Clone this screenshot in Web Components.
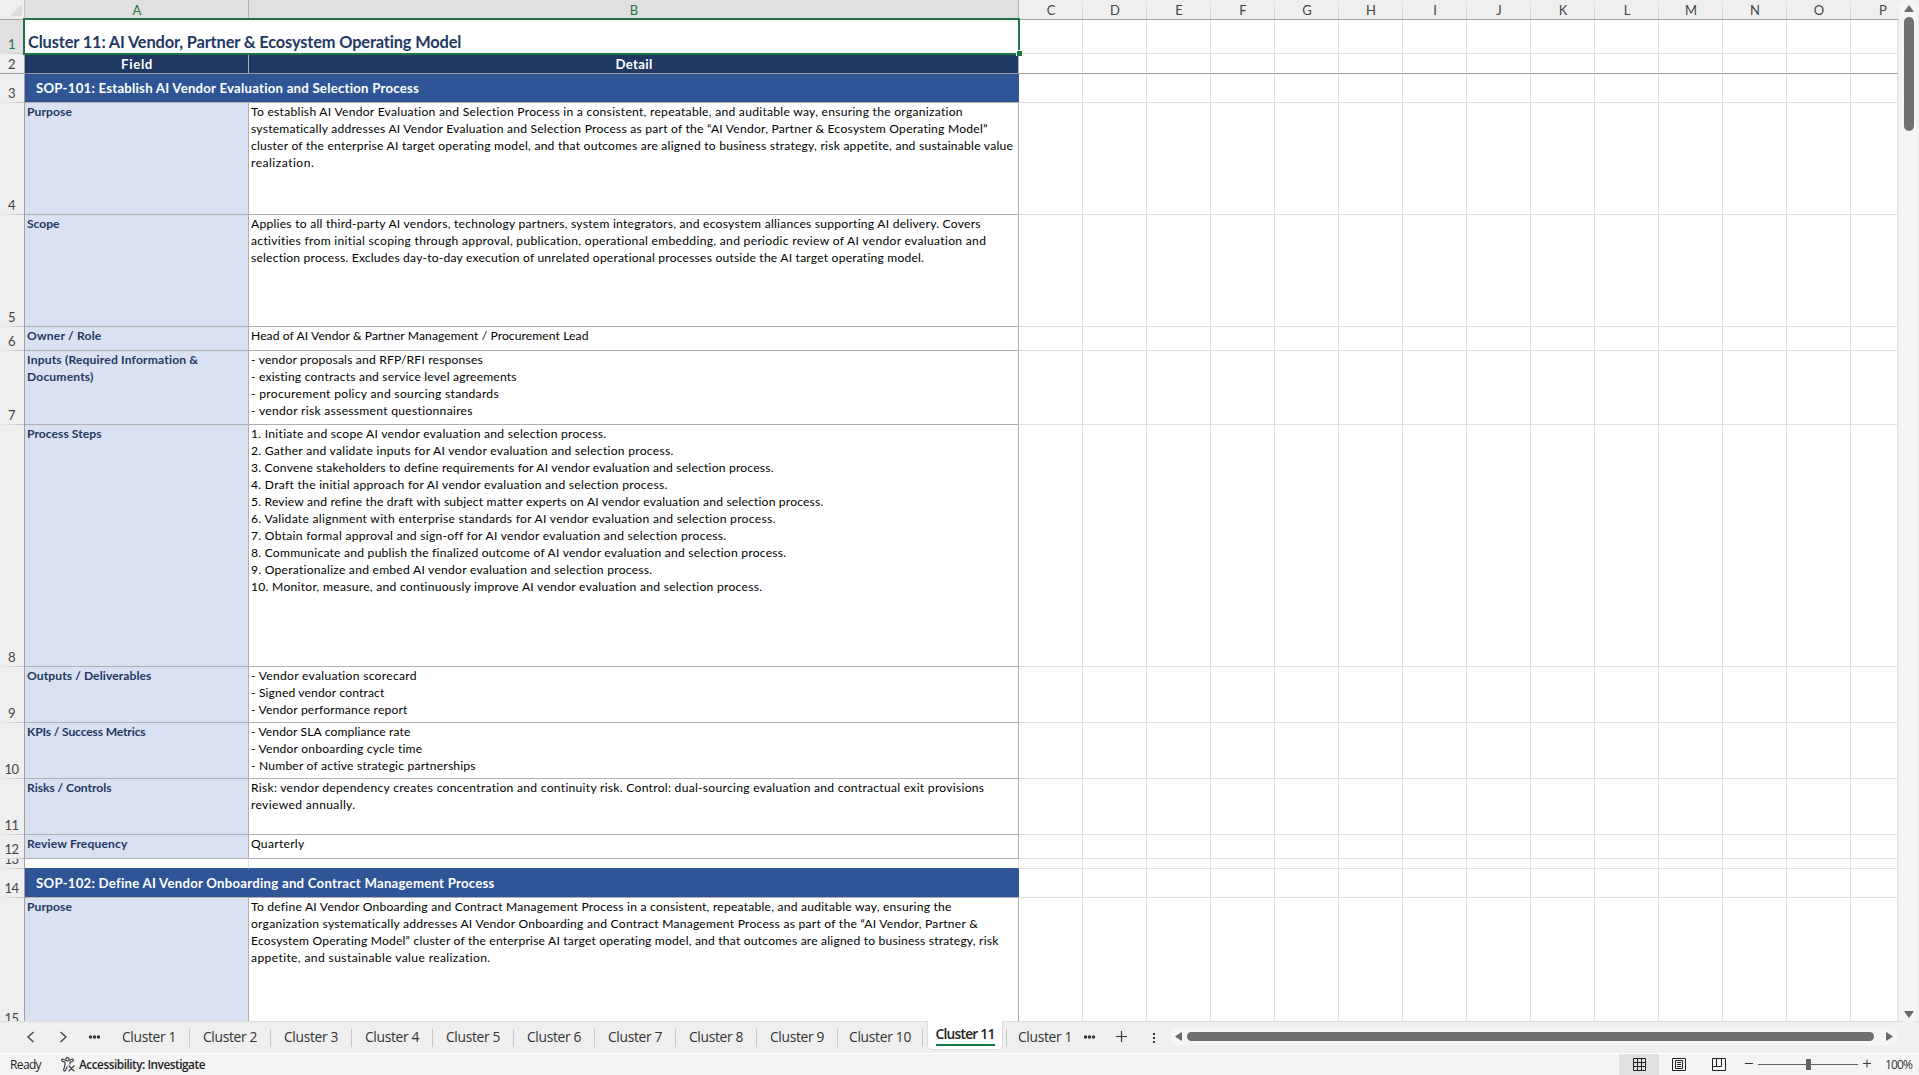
<!DOCTYPE html>
<html lang="en">
<head>
<meta charset="utf-8">
<title>Workbook</title>
<style>
  html, body { margin: 0; height: 100%; overflow: hidden; }
  body { font-family: Lato, "Liberation Sans", sans-serif; background: #f4f4f4; }
</style>
</head>
<body>
<work-book></work-book>

<script>
// small helper: attach an open shadow root and fill it
function shadow(el, html) {
  el.attachShadow({ mode: "open" });
  el.shadowRoot.innerHTML = html;
}

// one line of text, spaced so that it takes exactly `w` pixels
class FitText extends HTMLElement {
  constructor() {
    super();
    shadow(this, `<style>:host { display: flex; } span { flex: none; white-space: pre; }</style><span></span>`);
  }
  connectedCallback() {
    const span = this.shadowRoot.querySelector("span");
    span.textContent = this.getAttribute("text");
    const w = parseFloat(this.getAttribute("w"));
    if (w) {
      const natural = span.getBoundingClientRect().width;
      const gap = (w - natural) / span.textContent.length;
      span.style.letterSpacing = gap.toFixed(4) + "px";
    }
  }
}
customElements.define("fit-text", FitText);

const fit = ([text, w]) => `<fit-text text="${text.replace(/&/g, "&amp;")}" w="${w}"></fit-text>`;

// column letters along the top
class ColumnHeads extends HTMLElement {
  connectedCallback() {
    const rest = "CDEFGHIJKLMNOP".split("").map(c => `<div class="c">${c}</div>`).join("");
    shadow(this, `
      <style>
        :host { display: flex; flex: none; height: 19px; border-bottom: 1px solid #a0a0a0; background: #efefef; overflow: hidden;
                font-size: 13px; line-height: 18px; color: #444; }
        div { box-sizing: border-box; flex: none; text-align: center; height: 19px; padding: 1px 0 0 1px; }
        .corner { width: 25px; border-right: 1px solid #c4c4c4; padding: 4px 0 0 9px; line-height: 0; }
        .on { background: #e0e0e0; color: #217346; border-right: 1px solid #b4b4b4; }
        .a { width: 224px; }
        .b { width: 770px; }
        .c { width: 64px; border-right: 1px solid; border-image: linear-gradient(#efefef, #c8c8c8) 1; }
      </style>
      <div class="corner"><svg width="13" height="12"><path d="M12 0V12H0Z" fill="#dcdcdc"/></svg></div>
      <div class="on a">A</div><div class="on b">B</div>${rest}`);
  }
}
customElements.define("column-heads", ColumnHeads);

// one row of the sheet; kind is title, head, sop, field or blank
class SheetRow extends HTMLElement {
  set row(r) {
    const kind = r.kind;
    this.setAttribute("kind", kind);
    let cells;
    if (kind == "title" || kind == "sop") {
      cells = `<div class="wide">${fit(r.a)}</div>`;
    } else if (kind == "head") {
      cells = `<div class="a">${fit(r.a)}</div><div class="b">${fit(r.b)}</div>`;
    } else {
      cells = `<div class="a">${(r.a || []).map(fit).join("")}</div><div class="b">${(r.b || []).map(fit).join("")}</div>`;
    }
    shadow(this, `
      <style>
        :host { display: flex; flex: none; height: ${r.h}px; font-size: 12.1px; line-height: 17px; color: #000; }
        div { box-sizing: border-box; flex: none; }
        .n { width: 24px; display: flex; align-items: flex-end; justify-content: center; overflow: hidden;
             font-size: 13px; line-height: 16px; letter-spacing: -.6px; color: #444; background: #efefef;
             padding: 0 1px 1px 0;
             border-bottom: 1px solid; border-image: linear-gradient(90deg, #efefef, #c0c0c0) 1; }
        .bar { width: 1px; background: #a0a0a0; }
        .a { width: 224px; padding: 0 0 0 2px; border: solid #b0b0b0; border-width: 0 1px 1px 0; background: #d9e1f2;
             color: #1f3864; font-weight: bold; }
        .b { width: 770px; padding: 0 0 0 2px; border: solid #b0b0b0; border-width: 0 1px 1px 0; background: #fff; }
        .c { width: 64px; border: solid #e0e0e0; border-width: 0 1px 1px 0; background: #fff; }
        .c:last-child { width: 47px; }
        .wide { width: 994px; font-weight: bold; }
        :host([kind=title]) .n { background: #e0e0e0; color: #217346; }
        :host([kind=title]) .wide { font-size: 16.4px; line-height: 22px; padding: 11px 0 0 3px; color: #1f3864; background: #fff; }
        :host([kind=head]) .n, :host([kind=head]) .c { border-bottom: 1px solid #9a9a9a; border-image: none; }
        :host([kind=head]) .a, :host([kind=head]) .b { background: #203864; color: #fff; font-weight: bold; font-size: 13.2px;
             line-height: 18px; padding: 1px 0 0 1px; display: flex; justify-content: center; border-bottom-color: #9a9a9a; }
        :host([kind=sop]) .wide { font-size: 13.2px; line-height: 18px; padding: 5px 0 0 11px; color: #fff; background: #2f5597;
             border-bottom: 1px solid #b0b0b0; }
        :host([kind=blank]) .a, :host([kind=blank]) .b { background: #fff; border-color: #e0e0e0; border-bottom-color: #2f5597; }
      </style>
      <div class="n">${r.n}</div><div class="bar"></div>${cells}${'<div class="c"></div>'.repeat(14)}`);
  }
}
customElements.define("sheet-row", SheetRow);

const ROWS = [
  { n: 1, h: 34, kind: "title", a: ["Cluster 11: AI Vendor, Partner & Ecosystem Operating Model", 433.5] },
  { n: 2, h: 20, kind: "head", a: ["Field", 32], b: ["Detail", 37] },
  { n: 3, h: 29, kind: "sop", a: ["SOP-101: Establish AI Vendor Evaluation and Selection Process", 383.5] },
  { n: 4, h: 112, kind: "field", a: [["Purpose", 45]], b: [
    ["To establish AI Vendor Evaluation and Selection Process in a consistent, repeatable, and auditable way, ensuring the organization", 712.5],
    ["systematically addresses AI Vendor Evaluation and Selection Process as part of the “AI Vendor, Partner & Ecosystem Operating Model”", 737.5],
    ["cluster of the enterprise AI target operating model, and that outcomes are aligned to business strategy, risk appetite, and sustainable value", 762.5],
    ["realization.", 63.5]] },
  { n: 5, h: 112, kind: "field", a: [["Scope", 32.5]], b: [
    ["Applies to all third-party AI vendors, technology partners, system integrators, and ecosystem alliances supporting AI delivery. Covers", 730],
    ["activities from initial scoping through approval, publication, operational embedding, and periodic review of AI vendor evaluation and", 736.5],
    ["selection process. Excludes day-to-day execution of unrelated operational processes outside the AI target operating model.", 674]] },
  { n: 6, h: 24, kind: "field", a: [["Owner / Role", 74.5]], b: [["Head of AI Vendor & Partner Management / Procurement Lead", 337.5]] },
  { n: 7, h: 74, kind: "field", a: [["Inputs (Required Information &", 171.5], ["Documents)", 66.5]], b: [
    ["- vendor proposals and RFP/RFI responses", 232],
    ["- existing contracts and service level agreements", 266],
    ["- procurement policy and sourcing standards", 248],
    ["- vendor risk assessment questionnaires", 222]] },
  { n: 8, h: 242, kind: "field", a: [["Process Steps", 74.5]], b: [
    ["1. Initiate and scope AI vendor evaluation and selection process.", 356],
    ["2. Gather and validate inputs for AI vendor evaluation and selection process.", 423],
    ["3. Convene stakeholders to define requirements for AI vendor evaluation and selection process.", 523],
    ["4. Draft the initial approach for AI vendor evaluation and selection process.", 417],
    ["5. Review and refine the draft with subject matter experts on AI vendor evaluation and selection process.", 572],
    ["6. Validate alignment with enterprise standards for AI vendor evaluation and selection process.", 525],
    ["7. Obtain formal approval and sign-off for AI vendor evaluation and selection process.", 475.5],
    ["8. Communicate and publish the finalized outcome of AI vendor evaluation and selection process.", 535.5],
    ["9. Operationalize and embed AI vendor evaluation and selection process.", 402],
    ["10. Monitor, measure, and continuously improve AI vendor evaluation and selection process.", 512]] },
  { n: 9, h: 56, kind: "field", a: [["Outputs / Deliverables", 124.5]], b: [
    ["- Vendor evaluation scorecard", 166],
    ["- Signed vendor contract", 133.5],
    ["- Vendor performance report", 156.5]] },
  { n: 10, h: 56, kind: "field", a: [["KPIs / Success Metrics", 118.5]], b: [
    ["- Vendor SLA compliance rate", 159.5],
    ["- Vendor onboarding cycle time", 171.5],
    ["- Number of active strategic partnerships", 225]] },
  { n: 11, h: 56, kind: "field", a: [["Risks / Controls", 84.5]], b: [
    ["Risk: vendor dependency creates concentration and continuity risk. Control: dual-sourcing evaluation and contractual exit provisions", 734],
    ["reviewed annually.", 104.5]] },
  { n: 12, h: 24, kind: "field", a: [["Review Frequency", 100.5]], b: [["Quarterly", 53.5]] },
  { n: 13, h: 10, kind: "blank" },
  { n: 14, h: 29, kind: "sop", a: ["SOP-102: Define AI Vendor Onboarding and Contract Management Process", 458.5] },
  { n: 15, h: 130, kind: "field", a: [["Purpose", 45]], b: [
    ["To define AI Vendor Onboarding and Contract Management Process in a consistent, repeatable, and auditable way, ensuring the", 700.5],
    ["organization systematically addresses AI Vendor Onboarding and Contract Management Process as part of the “AI Vendor, Partner &", 727.5],
    ["Ecosystem Operating Model” cluster of the enterprise AI target operating model, and that outcomes are aligned to business strategy, risk", 748],
    ["appetite, and sustainable value realization.", 240]] }
];

class SheetGrid extends HTMLElement {
  connectedCallback() {
    shadow(this, `
      <style>
        :host { display: flex; flex-direction: column; position: relative; width: 1898px; height: 1021px; overflow: hidden; background: #fff; }
        .sel { position: absolute; left: 23px; top: 18px; width: 993px; height: 33px; border: 2px solid #217346; }
        .sel i { position: absolute; right: -4px; bottom: -3px; width: 5px; height: 5px; background: #217346;
                 border: solid #fff; border-width: 1px 0 0 1px; }
      </style>
      <column-heads></column-heads>
      <div class="sel"><i></i></div>`);
    const sel = this.shadowRoot.querySelector(".sel");
    ROWS.forEach(r => {
      const el = document.createElement("sheet-row");
      this.shadowRoot.insertBefore(el, sel);
      el.row = r;
    });
  }
}
customElements.define("sheet-grid", SheetGrid);

// vertical scroll bar
class ScrollColumn extends HTMLElement {
  connectedCallback() {
    shadow(this, `
      <style>
        :host { display: flex; flex-direction: column; align-items: center; box-sizing: border-box; width: 17px; height: 1023px;
                margin-left: 2px; padding: 5px 0 5px; background: #f5f5f5; border-radius: 8px; }
        .thumb { width: 10px; height: 114px; margin-top: 5px; border-radius: 5px; background: #707070; }
        svg { display: block; flex: none; }
        .down { margin-top: auto; }
      </style>
      <svg width="10" height="7"><path d="M5 0L9.6 6.2Q9.7 7 9 7H1Q.3 7 .4 6.2Z" fill="#6b6b6b"/></svg>
      <div class="thumb"></div>
      <svg class="down" width="10" height="7"><path d="M5 7L9.6 .8Q9.7 0 9 0H1Q.3 0 .4 .8Z" fill="#6b6b6b"/></svg>`);
  }
}
customElements.define("scroll-column", ScrollColumn);

class SheetTab extends HTMLElement {
  connectedCallback() {
    shadow(this, `
      <style>
        :host { display: flex; flex: none; box-sizing: border-box; justify-content: center; width: var(--w, 81px); height: 18px;
                margin-top: 7px; border-right: 1px solid #c8c8c8; line-height: 16px; color: #333; }
        :host([active]) { height: 29px; margin: -1px 3px 0 4px; border: 1px solid #dcdcdc; border-top: 0; border-radius: 0 0 5px 5px;
                background: #fff; font-weight: 600; line-height: 18px; color: #222; }
        :host([active]) div { height: 19px; padding-top: 4px; border-bottom: 2px solid #107c41; }
        :host([last]) { border: 0; justify-content: flex-start; padding-left: 11px; }
      </style>
      <div>${fit([this.getAttribute("text"), this.getAttribute("tw")])}</div>`);
  }
}
customElements.define("sheet-tab", SheetTab);

class TabBar extends HTMLElement {
  connectedCallback() {
    let tabs = "";
    for (let i = 1; i < 10; i++) tabs += `<sheet-tab text="Cluster ${i}" tw="54"></sheet-tab>`;
    shadow(this, `
      <style>
        :host { display: flex; box-sizing: border-box; height: 32px; border-top: 1px solid #dcdcdc; background: #efefef;
                font: 13.8px "Open Sans", sans-serif; }
        svg { display: block; flex: none; }
        .track { display: flex; align-items: center; box-sizing: border-box; width: 728px; height: 17px; margin-top: 6px;
                 padding: 0 5px; background: #f5f5f5; border-radius: 8px; }
        .thumb { flex: 1; height: 9px; margin: 0 12px 0 5px; border-radius: 5px; background: #707070; }
      </style>
      <svg width="109" height="31" fill="none" stroke="#444" stroke-width="1.4">
        <path d="M33.5 10L28 15L33.5 20M60.5 10L66 15L60.5 20"/>
        <g fill="#333" stroke="none"><circle cx="90.5" cy="15" r="1.7"/><circle cx="94.5" cy="15" r="1.7"/><circle cx="98.5" cy="15" r="1.7"/></g>
      </svg>
      ${tabs}
      <sheet-tab text="Cluster 10" tw="62" style="--w: 85px"></sheet-tab>
      <sheet-tab active text="Cluster 11" tw="59" style="--w: 76px"></sheet-tab>
      <svg width="1" height="31"><path d="M.5 7V25" stroke="#c8c8c8"/></svg>
      <sheet-tab last text="Cluster 1" tw="54" style="--w: 73px"></sheet-tab>
      <svg width="90" height="31">
        <g fill="#333"><circle cx="5.5" cy="15" r="1.7"/><circle cx="9.5" cy="15" r="1.7"/><circle cx="13.5" cy="15" r="1.7"/>
        <path d="M73 11h2v2h-2zM73 15h2v2h-2zM73 19h2v2h-2z"/></g>
        <path d="M36 14.5H47M41.5 9V20" stroke="#333" stroke-width="1.2"/>
      </svg>
      <div class="track">
        <svg width="7" height="9"><path d="M0 4.5L6.2 .3Q7 .2 7 1V8Q7 8.8 6.2 8.7Z" fill="#6b6b6b"/></svg>
        <div class="thumb"></div>
        <svg width="7" height="9"><path d="M7 4.5L.8 .3Q0 .2 0 1V8Q0 8.8 .8 8.7Z" fill="#6b6b6b"/></svg>
      </div>`);
  }
}
customElements.define("tab-bar", TabBar);

class StatusBar extends HTMLElement {
  connectedCallback() {
    shadow(this, `
      <style>
        :host { display: flex; align-items: center; box-sizing: border-box; height: 22px; border-top: 1px solid #fff; background: #f4f4f4;
                font: 12px/16px "Open Sans", sans-serif; color: #222; }
        svg { display: block; flex: none; }
        .ready { width: 61px; padding: 1px 0 0 10px; box-sizing: border-box; }
        .acc { margin-left: 4px; padding-bottom: 2px; font-size: 11.8px; font-weight: 600; }
        .view { display: flex; align-items: center; justify-content: center; width: 40px; height: 21px; }
        .on { background: #e0e0e0; }
        .space { flex: 1; }
        .zoom { width: 34px; color: #333; }
      </style>
      <div class="ready">${fit(["Ready", 31])}</div>
      <svg width="14" height="15" viewBox="0 0 14 15" fill="none" stroke="#333" stroke-width="1.1">
        <circle cx="6.5" cy="2.3" r="1.7"/>
        <path d="M4.8 3.2L2 2.2Q.7 2 .6 3.1Q.6 3.8 1.4 4.2L4 5.2V8L2.6 12.8Q2.5 14 3.5 14.1Q4.3 14.1 4.6 13.3L6.2 9.5M8.2 3.2L11 2.2Q12.3 2 12.4 3.1Q12.4 3.8 11.6 4.2L9 5.2V7.5M7.6 8.5L13.4 14.3M13.4 8.5L7.6 14.3"/>
      </svg>
      <div class="acc">${fit(["Accessibility: Investigate", 126])}</div>
      <div class="space"></div>
      <div class="view on"><svg width="13" height="13" fill="none" stroke="#222"><path d="M.5 .5H12.5V12.5H.5ZM4.5 .5V12.5M8.5 .5V12.5M.5 4.5H12.5M.5 8.5H12.5"/></svg></div>
      <div class="view"><svg width="14" height="13" fill="none" stroke="#222"><path d="M.5 .5H13.5V12.5H.5ZM3.5 2.5H10.5V10.5H3.5ZM5 4.5H9M5 6.5H9M5 8.5H9"/></svg></div>
      <div class="view"><svg width="14" height="13" fill="none" stroke="#222"><path d="M.5 .5H13.5V12.5H.5ZM.5 8.5H9.5V.5M4.5 .5V8.5"/></svg></div>
      <svg width="146" height="21">
        <path d="M6 9.5H14M124 9.5H132M128 5.5V13.5" stroke="#333"/>
        <path d="M19 10.5H119" stroke="#666"/>
        <path d="M67 5H72V16H67Z" fill="#666"/>
      </svg>
      <div class="zoom">${fit(["100%", 27])}</div>`);
  }
}
customElements.define("status-bar", StatusBar);

class WorkBook extends HTMLElement {
  connectedCallback() {
    shadow(this, `
      <style>
        :host { display: flex; flex-direction: column; width: 1919px; height: 1075px; overflow: hidden; background: #efefef; }
        .top { display: flex; height: 1021px; }
        scroll-column { position: relative; z-index: 1; }
      </style>
      <div class="top"><sheet-grid></sheet-grid><scroll-column></scroll-column></div>
      <tab-bar></tab-bar>
      <status-bar></status-bar>`);
  }
}
customElements.define("work-book", WorkBook);
</script>
</body>
</html>
